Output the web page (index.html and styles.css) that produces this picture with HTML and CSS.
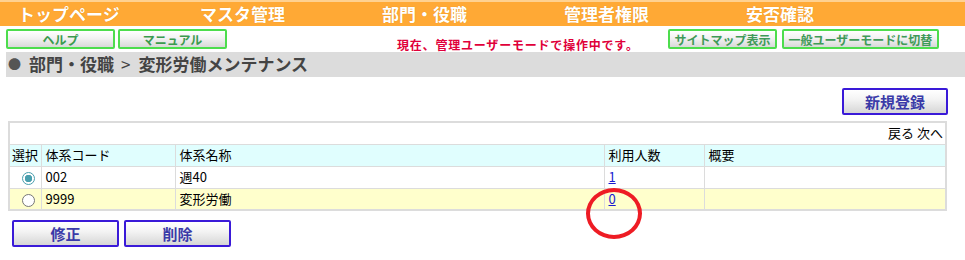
FILE: index.html
```html
<!DOCTYPE html>
<html>
<head>
	<meta charset="utf-8">
	<title>変形労働メンテナンス</title>
	<link rel="stylesheet" href="styles.css">
</head>
<body>
	<!-- グローバルメニュー -->
	<header class="gnav">
		<a href="#">トップページ</a>
		<a href="#">マスタ管理</a>
		<a href="#">部門・役職</a>
		<a href="#">管理者権限</a>
		<a href="#">安否確認</a>
	</header>
	<!-- サブメニュー -->
	<div class="subbar">
		<button class="gbtn w-help">ヘルプ</button>
		<button class="gbtn w-help">マニュアル</button>
		<p class="mode-msg">現在、管理ユーザーモードで操作中です。</p>
		<div class="subbar-right">
			<button class="gbtn w-map">サイトマップ表示</button>
			<button class="gbtn w-mode">一般ユーザーモードに切替</button>
		</div>
	</div>
	<h2 class="crumb"><span class="dot">●</span>部門・役職<span class="sep">&gt;</span>変形労働メンテナンス</h2>

	<div class="actions">
		<button class="bbtn">新規登録</button>
	</div>

	<section class="list">
		<table>
			<colgroup>
				<col style="width:32px">
				<col style="width:134px">
				<col style="width:429px">
				<col style="width:100px">
				<col>
			</colgroup>
			<tr class="pager"><td colspan="5"><span>戻る</span> <span>次へ</span></td></tr>
			<tr class="head">
				<td>選択</td><td>体系コード</td><td>体系名称</td><td>利用人数</td><td>概要</td>
			</tr>
			<tr>
				<td class="sel"><span class="radio on"></span></td>
				<td>002</td><td>週40</td><td><a href="#">1</a></td><td></td>
			</tr>
			<tr class="odd">
				<td class="sel"><span class="radio"></span></td>
				<td>9999</td><td>変形労働</td><td><a href="#">0</a></td><td></td>
			</tr>
		</table>
		<!-- 注目マーク -->
		<div class="mark"></div>
	</section>

	<div class="bottom">
		<button class="bbtn">修正</button>
		<button class="bbtn">削除</button>
	</div>
</body>
</html>
```

FILE: styles.css
```css
*{margin: 0;padding: 0;box-sizing: border-box;}
body{font-family: "Noto Sans CJK JP",sans-serif;font-size: 13px;color: #000;background: #fff;width: 965px;}
.gnav{display: flex;height: 26px;background: #ffa935;border-top: 2px solid #ffd190;}
.gnav a{display: block;width: 182px;padding-left: 18px;color: #fff;font-weight: bold;font-size: 17px;line-height: 23px;text-decoration: none;text-shadow: 0 0 1px #e08a10;}
.subbar{display: flex;align-items: flex-start;padding: 3px 26px 0 6px;height: 24px;}
.gbtn{height: 20px;padding: 0;margin-right: 3px;border: 2px solid #4ddd4d;border-radius: 2px;background: linear-gradient(#ffffff,#f2f2f2 45%,#d9d9d9);color: #3a9a4e;font-family: "Noto Sans CJK JP",sans-serif;font-weight: bold;font-size: 12px;line-height: 15px;}
.gbtn.w-help{width: 109px;}
.gbtn.w-map{width: 109px;}
.gbtn.w-mode{width: 157px;}
.mode-msg{margin: 9px 0 0 167px;color: #e0003a;font-weight: bold;font-size: 12px;letter-spacing: .8px;line-height: 14px;white-space: nowrap;}
.subbar-right{margin-left: auto;display: flex;}
.subbar-right .gbtn{margin: 0 0 0 5px;color: #3f9a58;}
.crumb{margin: 2px 0 0 6px;height: 25px;background: #dcdcdc;color: #444;font-size: 17px;font-weight: bold;line-height: 24px;padding-left: 2px;}
.crumb .dot{font-size: 13px;margin-right: 8px;vertical-align: 2px;color: #555;}
.crumb .sep{margin: 0 8px 0 7px;font-weight: normal;}
.actions{display: flex;justify-content: flex-end;padding: 11px 17px 0 0;}
.bbtn{width: 106px;height: 27px;border: 2px solid #3a1ad8;border-radius: 2px;background: linear-gradient(#ffffff,#f4f4f4 40%,#d6d6d6);color: #3a3aa8;font-family: "Noto Sans CJK JP",sans-serif;font-weight: bold;font-size: 15px;line-height: 21px;}
.list{position: relative;margin: 6px 0 0 8px;width: 939px;}
table{width: 939px;border-collapse: collapse;border: 2px solid #dcdcdc;table-layout: fixed;}
td{border: 1px solid #dcdcdc;height: 22px;padding: 0 4px;font-size: 13px;line-height: 20px;white-space: nowrap;overflow: hidden;}
.pager td{text-align: right;height: 22px;padding-right: 2px;}
.head td{background: #e0fefe;}
.head td:first-child{padding: 0 2px;}
.odd td{background: #ffffcc;}
td a{color: #1a1ad0;text-decoration: underline;}
td.sel{text-align: center;padding: 0;}
.radio{display: inline-block;width: 13px;height: 13px;border-radius: 50%;border: 1px solid #777;background: #fff;vertical-align: -3px;margin-left: 7px;}
.radio.on{border-color: #4a9fae;background: radial-gradient(circle,#4a9fae 0,#4a9fae 3.5px,#fff 4px);}
.mark{position: absolute;left: 578px;top: 67px;width: 56px;height: 51px;border: 4.5px solid #ee1c24;border-radius: 50%;}
.bottom{display: flex;gap: 5px;padding: 9px 0 0 12px;}
.bottom .bbtn{width: 107px;}
```
